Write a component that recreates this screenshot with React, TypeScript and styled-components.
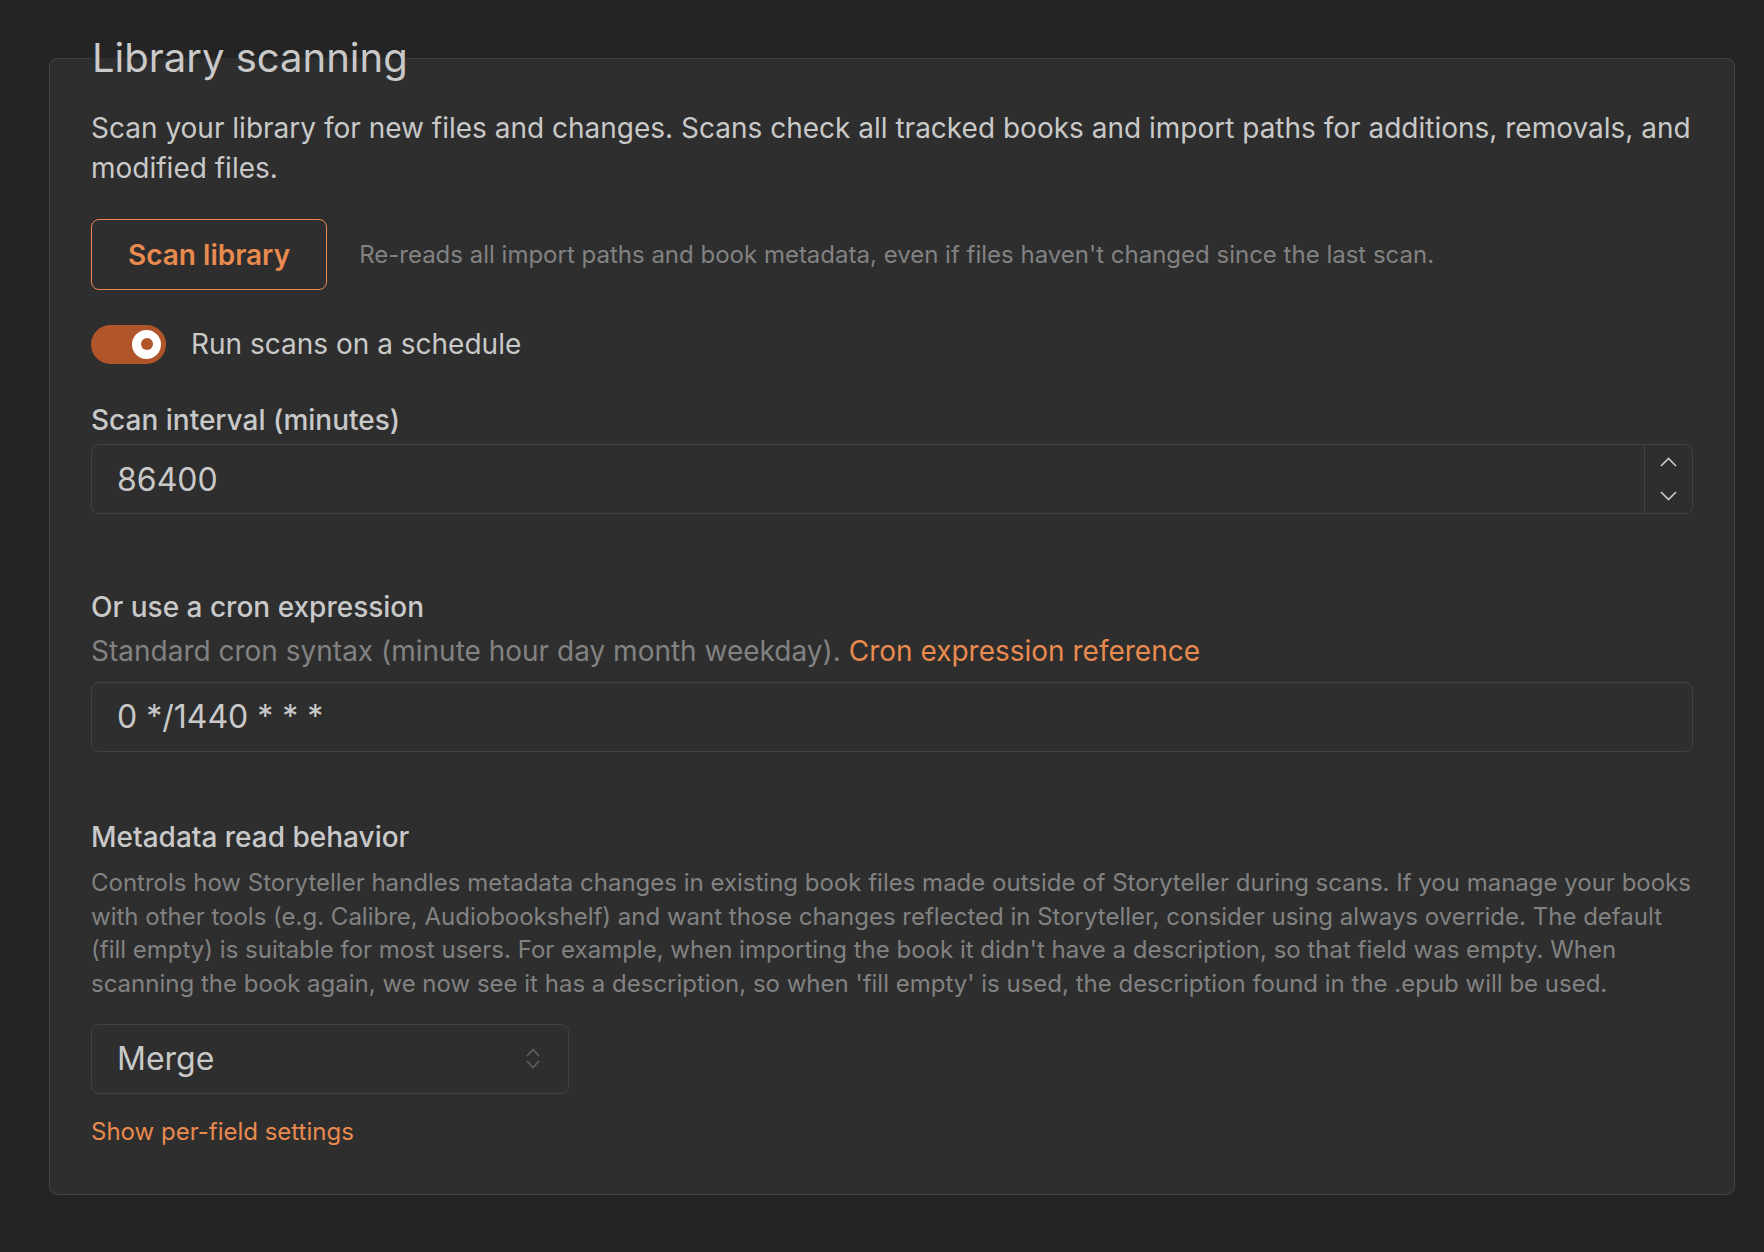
import styled, {createGlobalStyle} from "styled-components";

const GlobalStyle = createGlobalStyle`
  * {
    box-sizing: border-box;
  }

  body {
    margin: 0;
    background: #242424;
    font-family: Inter, "Noto Sans", sans-serif;
    color: #c9c9c9;
  }
`;

const theme = {
  text: "#c9c9c9",
  dimmed: "#828282",
  border: "#424242",
  surface: "#2e2e2e",
  accent: "#e98a4f",
  accentFilled: "#b0552a",
  fontMd: "28px",
  fontSm: "24px",
};

const Page = styled.div`
  min-height: 100vh;
  padding: 34px 29px 57px 49px;
`;

const Fieldset = styled.fieldset`
  margin: 0;
  padding: 27px 41px 44px;
  border: 1px solid ${theme.border};
  border-radius: 8px;
  background: ${theme.surface};
  min-width: 0;
`;

const Legend = styled.legend`
  padding: 0 1px;
  font-size: 40px;
  line-height: 48px;
  font-weight: 400;
  color: ${theme.text};
`;

const Text = styled.p<{$size?: "md" | "sm"; $dimmed?: boolean; $mt?: number}>`
  margin: ${(p) => p.$mt ?? 0}px 0 0;
  font-size: ${(p) => (p.$size === "sm" ? theme.fontSm : theme.fontMd)};
  line-height: ${(p) => (p.$size === "sm" ? "33.5px" : "39.7px")};
  color: ${(p) => (p.$dimmed ? theme.dimmed : theme.text)};
`;

const Anchor = styled.a<{$size?: "md" | "sm"}>`
  color: ${theme.accent};
  text-decoration: none;
  cursor: pointer;
  font-size: ${(p) => (p.$size === "sm" ? theme.fontSm : "inherit")};
  line-height: ${(p) => (p.$size === "sm" ? "34.7px" : "inherit")};
`;

const ActionRow = styled.div`
  display: flex;
  align-items: center;
  gap: 32px;
  margin-top: 31px;
`;

const OutlineButton = styled.button`
  flex-shrink: 0;
  height: 71px;
  padding: 0 36px;
  border: 1px solid ${theme.accent};
  border-radius: 8px;
  background: transparent;
  color: ${theme.accent};
  font-family: inherit;
  font-size: ${theme.fontMd};
  font-weight: 600;
  cursor: pointer;
`;

const SwitchRow = styled.label`
  display: flex;
  align-items: center;
  gap: 25px;
  margin-top: 34.4px;
  font-size: ${theme.fontMd};
  line-height: 39px;
  color: ${theme.text};
  cursor: pointer;
`;

const SwitchTrack = styled.span<{$on: boolean}>`
  display: flex;
  align-items: center;
  justify-content: ${(p) => (p.$on ? "flex-end" : "flex-start")};
  width: 75px;
  height: 39px;
  padding: 0 5px;
  border-radius: 999px;
  background: ${(p) => (p.$on ? theme.accentFilled : theme.border)};
`;

const SwitchThumb = styled.span`
  display: flex;
  align-items: center;
  justify-content: center;
  width: 29px;
  height: 29px;
  border-radius: 50%;
  background: #ffffff;
`;

const ThumbDot = styled.span`
  width: 12px;
  height: 12px;
  border-radius: 50%;
  background: ${theme.accentFilled};
`;

const Field = styled.div<{$mt: number}>`
  display: flex;
  flex-direction: column;
  margin-top: ${(p) => p.$mt}px;
`;

const Label = styled.div`
  font-size: ${theme.fontMd};
  line-height: 39.7px;
  font-weight: 500;
  color: ${theme.text};
`;

const InputShell = styled.div<{$mt: number; $width?: number}>`
  display: flex;
  align-items: stretch;
  height: 70px;
  width: ${(p) => (p.$width ? `${p.$width}px` : "100%")};
  margin-top: ${(p) => p.$mt}px;
  border: 1px solid ${theme.border};
  border-radius: 8px;
  background: ${theme.surface};
  overflow: hidden;
`;

const Input = styled.input`
  flex: 1;
  min-width: 0;
  padding: 0 25px;
  border: none;
  outline: none;
  background: transparent;
  color: ${theme.text};
  font-family: inherit;
  font-size: 32px;
`;

const Stepper = styled.div`
  display: flex;
  flex-direction: column;
  width: 48px;
  border-left: 1px solid ${theme.border};
`;

const StepButton = styled.button`
  flex: 1;
  display: flex;
  align-items: center;
  justify-content: center;
  padding: 0;
  border: none;
  background: transparent;
  color: ${theme.text};
  cursor: pointer;
`;

const SelectValue = styled.span`
  flex: 1;
  display: flex;
  align-items: center;
  padding: 0 25px;
  font-size: 32px;
  color: ${theme.text};
`;

const SelectIcon = styled.span`
  display: flex;
  align-items: center;
  justify-content: center;
  width: 70px;
  color: #5f5f5f;
`;

const Chevron = ({dir}: {dir: "up" | "down"}) => (
  <svg width="17" height="10" viewBox="0 0 17 10" fill="none">
    <path
      d={dir === "up" ? "M1 9 L8.5 1.5 L16 9" : "M1 1 L8.5 8.5 L16 1"}
      stroke="currentColor"
      strokeWidth="1.6"
    />
  </svg>
);

const SelectorIcon = () => (
  <svg width="14" height="23" viewBox="0 0 14 23" fill="none">
    <path d="M1 9 L7 2.5 L13 9" stroke="currentColor" strokeWidth="1.6" />
    <path d="M1 14 L7 20.5 L13 14" stroke="currentColor" strokeWidth="1.6" />
  </svg>
);

export default function App() {
  return (
    <>
      <GlobalStyle />
      <Page>
        <Fieldset>
          <Legend>Library scanning</Legend>
          <Text>
            Scan your library for new files and changes. Scans check all tracked books and
            import paths for additions, removals, and modified files.
          </Text>

          <ActionRow>
            <OutlineButton>Scan library</OutlineButton>
            <Text $size="sm" $dimmed>
              Re-reads all import paths and book metadata, even if files haven't changed since
              the last scan.
            </Text>
          </ActionRow>

          <SwitchRow>
            <SwitchTrack $on>
              <SwitchThumb>
                <ThumbDot />
              </SwitchThumb>
            </SwitchTrack>
            Run scans on a schedule
          </SwitchRow>

          <Field $mt={37}>
            <Label>Scan interval (minutes)</Label>
            <InputShell $mt={3.5}>
              <Input defaultValue="86400" />
              <Stepper>
                <StepButton aria-label="Increment">
                  <Chevron dir="up" />
                </StepButton>
                <StepButton aria-label="Decrement">
                  <Chevron dir="down" />
                </StepButton>
              </Stepper>
            </InputShell>
          </Field>

          <Field $mt={73.9}>
            <Label>Or use a cron expression</Label>
            <Text $dimmed $mt={4}>
              Standard cron syntax (minute hour day month weekday).{" "}
              <Anchor>Cron expression reference</Anchor>
            </Text>
            <InputShell $mt={10.6}>
              <Input defaultValue="0 */1440 * * *" />
            </InputShell>
          </Field>

          <Field $mt={66.5}>
            <Label>Metadata read behavior</Label>
            <Text $size="sm" $dimmed $mt={8}>
              Controls how Storyteller handles metadata changes in existing book files made
              outside of Storyteller during scans. If you manage your books with other tools
              (e.g. Calibre, Audiobookshelf) and want those changes reflected in Storyteller,
              consider using always override. The default (fill empty) is suitable for most
              users. For example, when importing the book it didn't have a description, so that
              field was empty. When scanning the book again, we now see it has a description, so
              when 'fill empty' is used, the description found in the .epub will be used.
            </Text>
            <InputShell $mt={23.5} $width={478}>
              <SelectValue>Merge</SelectValue>
              <SelectIcon>
                <SelectorIcon />
              </SelectIcon>
            </InputShell>
          </Field>

          <Field $mt={21.6}>
            <Anchor $size="sm">Show per-field settings</Anchor>
          </Field>
        </Fieldset>
      </Page>
    </>
  );
}
